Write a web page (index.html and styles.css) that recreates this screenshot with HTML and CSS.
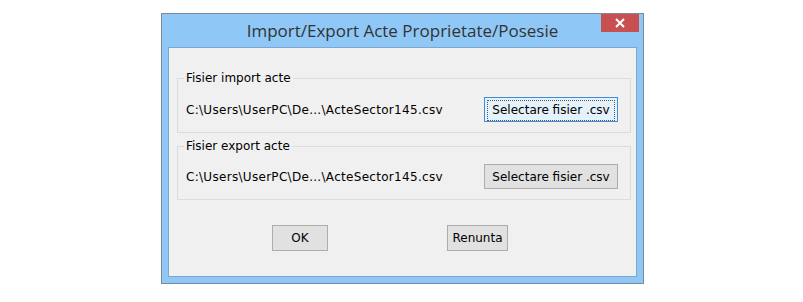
FILE: index.html
```html
<!DOCTYPE html>
<html lang="ro">
<head>
  <meta charset="UTF-8">
  <title>Import/Export Acte Proprietate/Posesie</title>
  <link rel="stylesheet" href="styles.css">
</head>
<body>
  <div class="window">
    <div class="titlebar">
      <span></span>
      <span class="title">Import/Export Acte Proprietate/Posesie</span>
      <button class="close" title="Inchide">
        <svg width="10" height="10" viewBox="0 0 10 10">
          <path d="M1 1 L9 9 M9 1 L1 9" stroke="#fff" stroke-width="2"/>
        </svg>
      </button>
    </div>

    <div class="client">
      <fieldset class="group group-import">
        <legend>Fisier import acte</legend>
        <div class="file-row">
          <span class="path">C:\Users\UserPC\De...\ActeSector145.csv</span>
          <button class="btn btn-file focused"><span>Selectare fisier .csv</span></button>
        </div>
      </fieldset>

      <fieldset class="group group-export">
        <legend>Fisier export acte</legend>
        <div class="file-row">
          <span class="path">C:\Users\UserPC\De...\ActeSector145.csv</span>
          <button class="btn btn-file"><span>Selectare fisier .csv</span></button>
        </div>
      </fieldset>

      <div class="actions">
        <button class="btn btn-ok">OK</button>
        <button class="btn btn-cancel">Renunta</button>
      </div>
    </div>
  </div>
</body>
</html>
```

FILE: styles.css
```css
body {
  margin: 0;
  padding-top: 13px;
  background: #fff;
  font-family: "DejaVu Sans", Tahoma, sans-serif;
  font-size: 12px;
  color: #000;
}
.window {
  width: 481px;
  margin-left: 161px;
  border: 1px solid #7d8b98;
  background: #8fc8f7;
}
.titlebar {
  height: 33px;
  display: grid;
  grid-template-columns: 1fr auto 1fr;
  align-items: start;
}
.title {
  font-family: "Open Sans", "Noto Sans", sans-serif;
  font-size: 17px;
  color: #333;
  line-height: 34px;
}
.close {
  justify-self: end;
  width: 38px;
  height: 18px;
  margin-right: 4px;
  border: none;
  padding: 0;
  background: #c75050;
  display: flex;
  align-items: center;
  justify-content: center;
}
.client {
  margin: 0 6px 6px;
  height: 205px;
  border: 1px solid #7fa6cc;
  background: #f0f0f0;
  padding: 23px 5px 0 8px;
}
.group {
  margin: 0;
  padding: 11px 12px 10px 8px;
  border: 1px solid #dcdcdc;
}
.group-import {
  padding-top: 12px;
}
.group-export {
  margin-top: 6px;
}
legend {
  margin-left: -2px;
  padding: 0 2px;
  line-height: 14px;
}
.file-row {
  display: flex;
  align-items: center;
  justify-content: space-between;
}
.path {
  white-space: nowrap;
  letter-spacing: 0.3px;
}
.btn {
  font-family: inherit;
  font-size: 12px;
  color: #000;
  background: #e1e1e1;
  border: 1px solid #adadad;
  padding: 0;
  height: 25px;
}
.btn-file {
  width: 134px;
}
.btn-file span {
  display: block;
  margin: 2px;
  line-height: 19px;
  border: 1px dotted transparent;
}
.btn-file.focused {
  border-color: #3c8fe0;
  background: #e5f1fb;
}
.btn-file.focused span {
  border-color: #555;
}
.actions {
  display: flex;
  gap: 119px;
  margin-top: 25px;
  padding-left: 95px;
}
.btn-ok {
  width: 56px;
  height: 26px;
}
.btn-cancel {
  width: 61px;
  height: 26px;
}
```
